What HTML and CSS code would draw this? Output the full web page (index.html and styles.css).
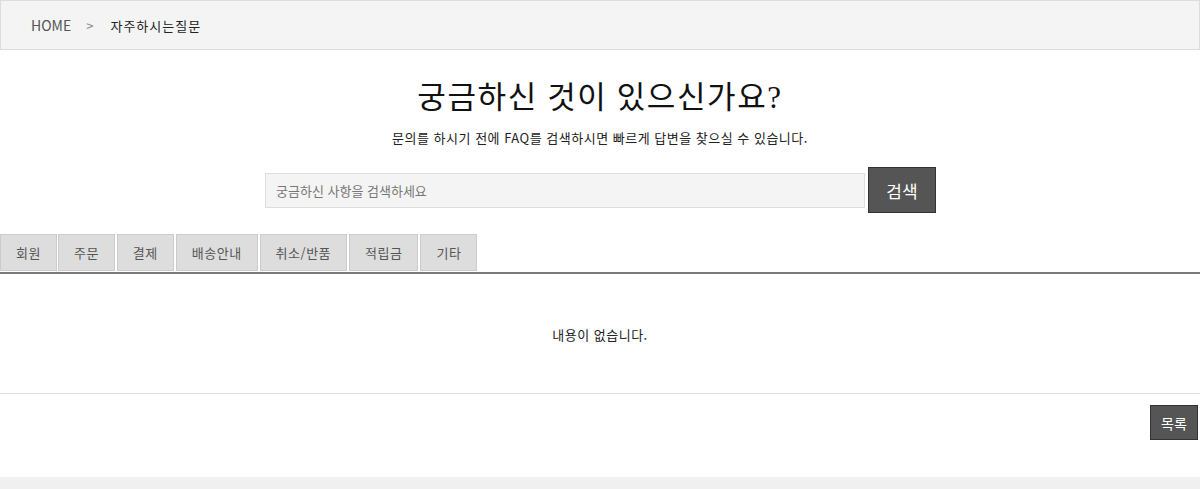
FILE: index.html
```html
<!DOCTYPE html>
<html lang="ko">
<head>
<meta charset="utf-8">
<title>자주하시는질문</title>
<link rel="stylesheet" href="styles.css">
</head>
<body>
<div class="breadcrumb">
  <span class="home">HOME</span>
  <span class="sep">&gt;</span>
  <span class="current">자주하시는질문</span>
</div>
<div class="faq-head">
  <h2 class="title">궁금하신 것이 있으신가요?</h2>
  <p class="desc">문의를 하시기 전에 FAQ를 검색하시면 빠르게 답변을 찾으실 수 있습니다.</p>
  <div class="search">
    <input class="search-input" type="text" placeholder="궁금하신 사항을 검색하세요">
    <button class="search-btn">검색</button>
  </div>
</div>
<ul class="tabs">
  <li class="tab">회원</li>
  <li class="tab">주문</li>
  <li class="tab">결제</li>
  <li class="tab">배송안내</li>
  <li class="tab">취소/반품</li>
  <li class="tab">적립금</li>
  <li class="tab">기타</li>
</ul>
<div class="empty">내용이 없습니다.</div>
<div class="actions">
  <button class="list-btn">목록</button>
</div>
<div class="footer"></div>
</body>
</html>
```
FILE: styles.css
```css
* { box-sizing: border-box; }
html, body { margin: 0; padding: 0; }
body {
  font-family: "Noto Sans CJK KR", "Noto Sans", sans-serif;
  color: #222;
  background: #fff;
  width: 1200px;
}
.breadcrumb {
  height: 50px;
  border: 1px solid #ddd;
  background: #f4f4f4;
  display: flex;
  align-items: center;
  padding-left: 30px;
  font-size: 14px;
}
.breadcrumb .home { color: #555; }
.breadcrumb .sep { color: #888; margin-left: 15px; font-size: 13px; }
.breadcrumb .current { color: #222; margin-left: 17px; font-size: 13px; letter-spacing: 1px; }

.faq-head {
  display: flex;
  flex-direction: column;
  align-items: center;
}
.title {
  margin: 28px 0 0;
  font-family: "Liberation Serif", "Noto Sans CJK KR", serif;
  font-weight: normal;
  font-size: 31px;
  letter-spacing: 1.6px;
  line-height: 40px;
  color: #111;
}
.desc {
  margin: 10px 0 0;
  font-size: 13px;
  letter-spacing: 0.5px;
  line-height: 20px;
  color: #222;
}
.search {
  margin-top: 19px;
  display: flex;
  align-items: center;
  gap: 3px;
  padding-left: 1px;
}
.search-input {
  width: 600px;
  height: 35px;
  border: 1px solid #ddd;
  background: #f4f4f4;
  padding: 0 10px;
  font-family: "Noto Sans CJK KR", sans-serif;
  font-size: 13px;
  color: #666;
  outline: none;
}
.search-input::placeholder { color: #777; }
.search-btn {
  width: 68px;
  height: 46px;
  background: #555;
  border: 1px solid #333;
  color: #fff;
  font-family: "Noto Sans CJK KR", sans-serif;
  font-size: 17px;
  padding: 0;
}
.tabs {
  list-style: none;
  margin: 21px 0 0;
  padding: 0 0 1px;
  display: flex;
  gap: 1px;
  border-bottom: 2px solid #7a7a7a;
}
.tab {
  height: 37px;
  padding: 0 15px;
  border: 1px solid #ccc;
  background: #ddd;
  color: #555;
  font-size: 13px;
  letter-spacing: 0.5px;
  display: flex;
  align-items: center;
  justify-content: center;
}
.tab:nth-child(n+3) { margin-left: 1px; }
.empty {
  height: 120px;
  border-bottom: 1px solid #ddd;
  display: flex;
  align-items: center;
  justify-content: center;
  font-size: 13px;
  letter-spacing: 0.5px;
  color: #222;
  padding-top: 2px;
}
.actions {
  display: flex;
  justify-content: flex-end;
  padding: 11px 2px 0 0;
  height: 83px;
}
.list-btn {
  width: 48px;
  height: 35px;
  background: #555;
  border: 1px solid #333;
  color: #fff;
  font-family: "Noto Sans CJK KR", sans-serif;
  font-size: 14px;
  padding: 0;
}
.footer {
  height: 12px;
  background: #f0f0f0;
}
```
